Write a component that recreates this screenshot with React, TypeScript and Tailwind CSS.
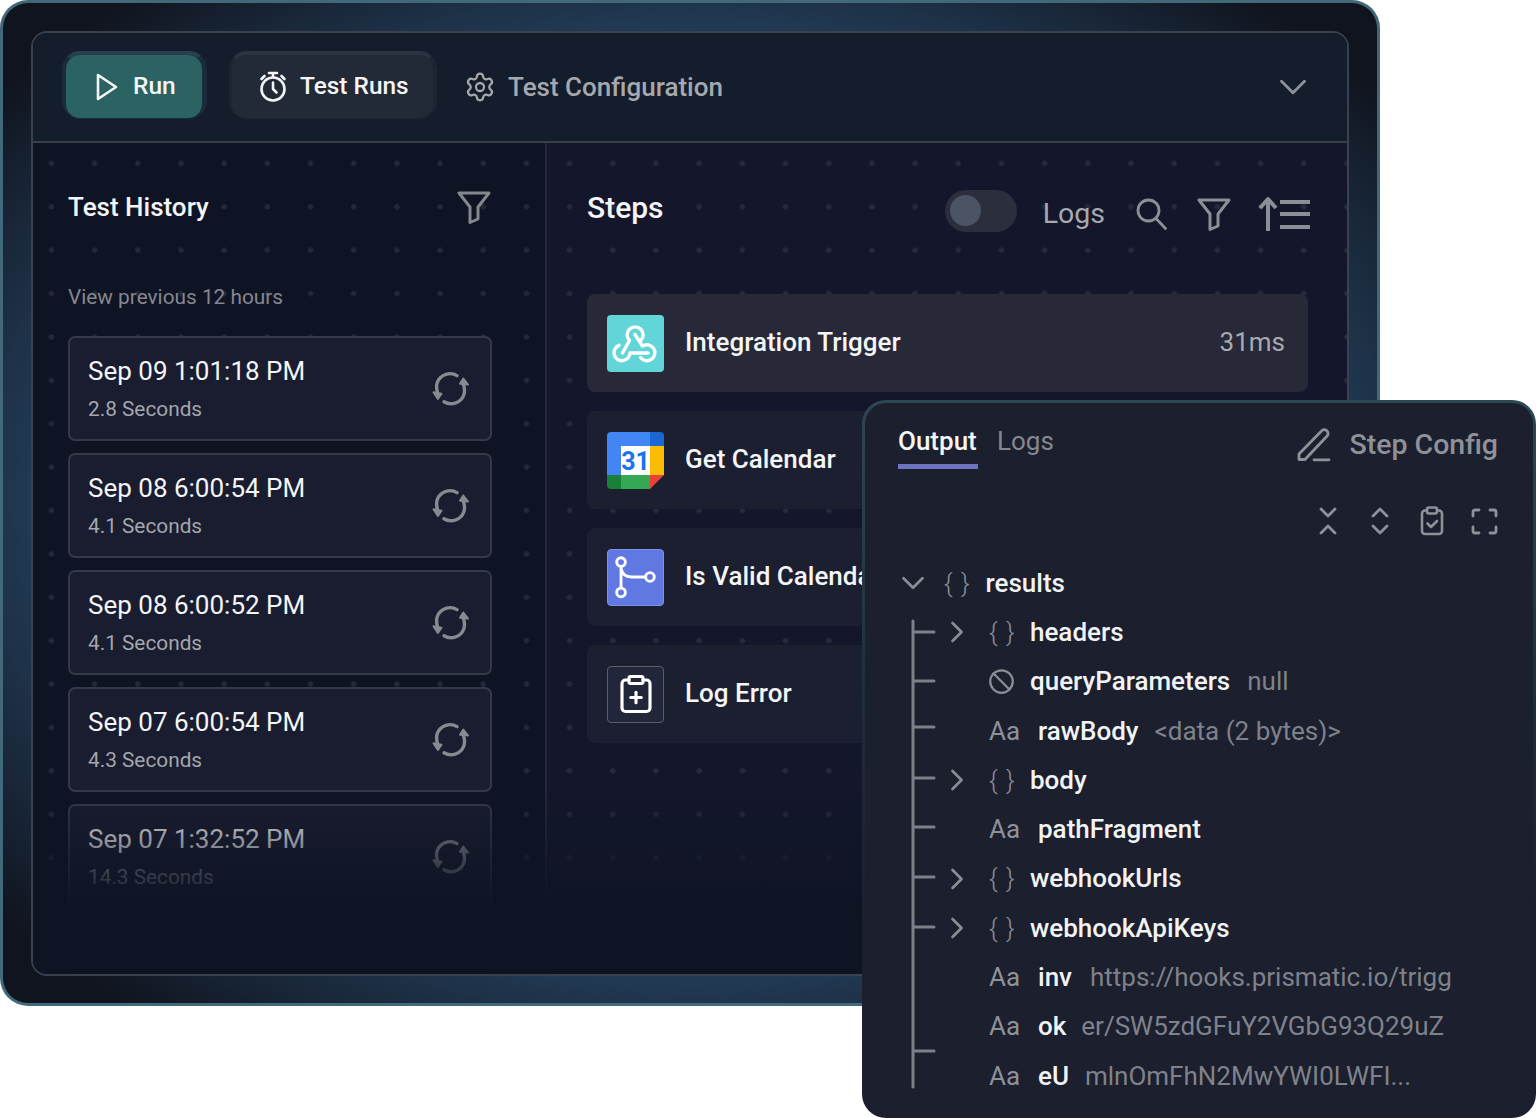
import React from "react";
import { ChevronDown, ChevronRight, Settings, ClipboardPlus, Ban } from "lucide-react";

const Funnel = ({ className }: { className?: string }) => (
  <svg viewBox="0 0 34 34" fill="none" stroke="currentColor" strokeWidth="3" strokeLinejoin="round" strokeLinecap="round" className={className}>
    <path d="M2 3h30L21 17v12l-8 3.500V17L2 3Z" />
  </svg>
);

const Refresh = () => (
  <svg viewBox="0 0 40 38" fill="none" stroke="currentColor" strokeWidth="3.400" strokeLinecap="round" strokeLinejoin="round" className="w-10 h-[38px] shrink-0">
    <path d="M26 5.600C19.500 1.600 9.500 4 6.300 12.500 5.200 15.500 5.400 19 6.600 23" />
    <path d="M13 31.800c6.500 4 16.600 1.800 19.800-6.800 1.100-3 .900-6.500-.3-10.500" />
    <path d="M2.500 22.300l8 1.500-3.600 5.200Z" fill="currentColor" strokeWidth="2" />
    <path d="M37 14.500l-8-.8 3.300-5.200Z" fill="currentColor" strokeWidth="2" />
  </svg>
);

const history = [
  ["Sep 09 1:01:18 PM", "2.8 Seconds"],
  ["Sep 08 6:00:54 PM", "4.1 Seconds"],
  ["Sep 08 6:00:52 PM", "4.1 Seconds"],
  ["Sep 07 6:00:54 PM", "4.3 Seconds"],
  ["Sep 07 1:32:52 PM", "14.3 Seconds"],
];

const WebhookIcon = () => (
  <div className="w-[57px] h-[57px] shrink-0 rounded-[4px] bg-[#62d5d8]">
    <svg viewBox="0 0 57 57" fill="none" stroke="#fff" strokeWidth="3.400" strokeLinecap="round" strokeLinejoin="round" className="w-full h-full">
      <path d="M12 30.300A8 8 0 1 0 23 38H41" />
      <path d="M33.500 42.500A8 8 0 1 0 35.500 31L28 19.500" />
      <path d="M33.800 25.500A8 8 0 1 0 22.500 25.500L15.500 38" />
    </svg>
  </div>
);

const CalendarIcon = () => (
  <svg viewBox="0 0 57 57" className="w-[57px] h-[57px] shrink-0">
    <path d="M4 0h39v14H14v29H0V4a4 4 0 0 1 4-4Z" fill="#4285f4" />
    <path d="M43 0h10a4 4 0 0 1 4 4v10H43Z" fill="#1967d2" />
    <rect x="14" y="14" width="29" height="29" fill="#fff" />
    <rect x="43" y="14" width="14" height="29" fill="#fbbc04" />
    <rect x="14" y="43" width="29" height="14" fill="#34a853" />
    <path d="M0 43h14v14H4a4 4 0 0 1-4-4Z" fill="#188038" />
    <path d="M43 43h14L43 57Z" fill="#ea4335" />
    <text x="28.500" y="37.500" textAnchor="middle" fontFamily="Roboto, sans-serif" fontWeight="700" fontSize="25" fill="#1a73e8">31</text>
  </svg>
);

const BranchIcon = () => (
  <div className="w-[57px] h-[57px] shrink-0 rounded-[4px] bg-[#5f78e2] border border-[#7d90e8]">
    <svg viewBox="0 0 57 57" fill="none" stroke="#fff" strokeWidth="3" className="w-full h-full">
      <circle cx="13.500" cy="12.500" r="4.500" />
      <circle cx="13.500" cy="44" r="4.500" />
      <circle cx="43.500" cy="28" r="4.500" />
      <path d="M13.500 17v22.500M13.500 19c1 6 5 9 11 9H39" />
    </svg>
  </div>
);

type TreeRow = {
  kind: "obj" | "null" | "str";
  key: string;
  value?: string;
  gap?: string;
};

const tree: TreeRow[] = [
  { kind: "obj", key: "headers" },
  { kind: "null", key: "queryParameters", value: "null", gap: "ml-[17px]" },
  { kind: "str", key: "rawBody", value: "<data (2 bytes)>", gap: "ml-[16px]" },
  { kind: "obj", key: "body" },
  { kind: "str", key: "pathFragment" },
  { kind: "obj", key: "webhookUrls" },
  { kind: "obj", key: "webhookApiKeys" },
  { kind: "str", key: "inv", value: "https://hooks.prismatic.io/trigg", gap: "ml-[18px]" },
  { kind: "str", key: "ok", value: "er/SW5zdGFuY2VGbG93Q29uZ", gap: "ml-[15px]" },
  { kind: "str", key: "eU", value: "mlnOmFhN2MwYWI0LWFI...", gap: "ml-[16px]" },
];

const Braces = () => <span className="text-[#8b8d95] text-[26px] font-light w-[24px] tracking-[1px] whitespace-nowrap shrink-0">{"{ }"}</span>;

export default function App() {
  return (
    <div className="relative w-[1536px] h-[1118px] bg-white overflow-hidden font-[Roboto,sans-serif]">
      <div className="w-[1380px] h-[1006px] rounded-[28px] p-[3px] bg-[#41697a]">
        <div className="w-full h-full rounded-[25px] pt-[28px] pl-[28px] pr-[28px] pb-[27px] bg-[radial-gradient(ellipse_at_center,#25425f_62%,#10141e_92%)]">
          <div className="relative w-full h-full rounded-[16px] border-2 border-[#3a404d] flex flex-col overflow-hidden bg-[#0f1425]">
            <header className="h-[110px] shrink-0 bg-[#141d2b] border-b-2 border-[#3a3e4b] flex items-center pl-[29px] pr-[31px]">
              <div className="w-[145px] h-[68px] -mt-[4px] rounded-[18px] border-l-[4px] border-r-[5px] border-t-[4px] border-b-[1px] border-x-[#1c2b3b] border-b-[#1c2b3b] border-t-[#274050]">
                <button className="w-full h-full rounded-[14px] bg-[#2a6361] flex items-center pl-[29px] gap-[14px] text-[#f4f5f7] text-[24.500px] font-medium">
                  <svg viewBox="0 0 24 30" fill="none" stroke="currentColor" strokeWidth="2.600" strokeLinejoin="round" className="w-[24px] h-[30px]">
                    <path d="M3 3v24l18-12Z" />
                  </svg>
                  Run
                </button>
              </div>
              <div className="ml-[22px] w-[208px] h-[68px] -mt-[4px] rounded-[18px] border-l-[3px] border-r-[4px] border-t-[4px] border-b-[1px] border-x-[#1c2533] border-b-[#1c2533] border-t-[#2b3443]">
                <button className="w-full h-full rounded-[14px] bg-[#222a38] flex items-center pl-[26px] gap-[12px] text-[#f4f5f7] text-[24.400px] font-medium">
                  <svg viewBox="0 0 30 32" fill="none" stroke="currentColor" strokeWidth="2.600" strokeLinecap="round" strokeLinejoin="round" className="w-[30px] h-[32px]">
                    <circle cx="15" cy="18" r="11.500" />
                    <path d="M15 11.500V18l3.500 3.500M11 2h8M15 2v4M3.500 8l3-3M26.500 8l-3-3" />
                  </svg>
                  Test Runs
                </button>
              </div>
              <Settings className="ml-[27px] w-[32px] h-[32px] text-[#a6a8ae]" strokeWidth={1.700} />
              <span className="ml-[12px] text-[26px] font-medium text-[#a6a8ae]">Test Configuration</span>
              <ChevronDown className="ml-auto w-[46px] h-[46px] text-[#8f9199]" strokeWidth={1.500} />
            </header>

            <div className="flex-1 min-h-0 flex">
              <section className="w-[514px] shrink-0 border-r-2 border-[#242838] pl-[35px] pr-[53px] pt-[44px] bg-[#0f1425] bg-[radial-gradient(circle,#242939_2.400px,transparent_3px)] bg-[size:43.200px_43.400px] bg-[position:-3.200px_-1.300px]">
                <div className="h-[40px] flex items-center justify-between">
                  <h2 className="text-[26px] font-medium text-[#f4f5f7]">Test History</h2>
                  <Funnel className="w-[34px] h-[34px] text-[#85878f] mr-[1px]" />
                </div>
                <p className="mt-[58px] h-[24px] leading-[24px] text-[20.800px] text-[#85878f]">View previous 12 hours</p>
                <div className="mt-[27px] flex flex-col gap-[12px]">
                  {history.map(([time, dur]) => (
                    <div key={time} className="h-[105px] shrink-0 rounded-[7px] border-2 border-[#343847] bg-[#191d2f] flex items-center justify-between pl-[18px] pr-[19px]">
                      <div className="pt-[1px]">
                        <div className="text-[26px] leading-[32px] text-[#f4f5f7] -mt-[2px]">{time}</div>
                        <div className="mt-[9px] text-[20.800px] leading-[26px] text-[#a4a6ad]">{dur}</div>
                      </div>
                      <span className="text-[#888a92]"><Refresh /></span>
                    </div>
                  ))}
                  <div className="h-[105px] shrink-0 rounded-[7px] border-2 border-[#343847] bg-[#191d2f]" />
                </div>
              </section>

              <section className="flex-1 min-w-0 pl-[40px] pr-[39px] bg-[#14172b] bg-[radial-gradient(circle,#252a3c_2.400px,transparent_3px)] bg-[size:43.200px_43.400px] bg-[position:1px_-1.300px]">
                <div className="h-[151px] pt-[44px] flex items-start">
                  <h2 className="h-[42px] leading-[42px] text-[30px] font-medium text-[#f4f5f7]">Steps</h2>
                  <div className="ml-auto flex items-center -mt-[1px] -mr-[2px]">
                    <div className="w-[72px] h-[42px] rounded-full bg-[#2b2e3d] flex items-center pl-[5px]">
                      <div className="w-[31px] h-[31px] rounded-full bg-[#4b5364]" />
                    </div>
                    <span className="ml-[26px] mt-[7px] text-[28.500px] text-[#a8a9ae]">Logs</span>
                    <svg viewBox="0 0 31 32" fill="none" stroke="#8d8f97" strokeWidth="2.800" strokeLinecap="round" className="ml-[31px] mt-[7px] w-[31px] h-[32px]">
                      <circle cx="12.500" cy="12.500" r="10.500" />
                      <path d="M20 20.500L29.500 30.500" />
                    </svg>
                    <Funnel className="ml-[30px] mt-[7px] w-[34px] h-[34px] text-[#8d8f97]" />
                    <svg viewBox="0 0 52 36" fill="none" stroke="#8d8f97" strokeWidth="4" className="ml-[27px] mt-[7px] w-[52px] h-[36px]">
                      <path d="M10 35V3M2 12l8-9 8 9" strokeLinejoin="round" />
                      <path d="M22 6h30M22 18h30M22 31h30" />
                    </svg>
                  </div>
                </div>
                <div className="flex flex-col gap-[19px]">
                  <div className="h-[98px] rounded-[8px] bg-[#272838] flex items-center pl-[20px] pr-[23px]">
                    <WebhookIcon />
                    <span className="ml-[21px] mb-[2px] text-[26px] font-medium text-[#f4f5f7]">Integration Trigger</span>
                    <span className="ml-auto mb-[2px] text-[26px] text-[#a9aab0]">31ms</span>
                  </div>
                  <div className="h-[98px] rounded-[8px] bg-[#1c1f30] flex items-center pl-[20px]">
                    <CalendarIcon />
                    <span className="ml-[21px] mb-[2px] text-[26px] font-medium text-[#f4f5f7]">Get Calendar</span>
                  </div>
                  <div className="h-[98px] rounded-[8px] bg-[#1c1f30] flex items-center pl-[20px]">
                    <BranchIcon />
                    <span className="ml-[21px] mb-[2px] text-[26px] font-medium text-[#f4f5f7] whitespace-nowrap">Is Valid Calendar</span>
                  </div>
                  <div className="h-[98px] rounded-[8px] bg-[#1c1f30] flex items-center pl-[20px]">
                    <div className="w-[57px] h-[57px] shrink-0 rounded-[4px] bg-[#22263a] border border-[#5b5e6a] flex items-center justify-center">
                      <ClipboardPlus className="w-[42px] h-[42px] text-white" strokeWidth={1.800} />
                    </div>
                    <span className="ml-[21px] mb-[2px] text-[26px] font-medium text-[#f4f5f7]">Log Error</span>
                  </div>
                </div>
              </section>
            </div>

            <div className="absolute left-0 right-0 bottom-0 h-[185px] bg-[linear-gradient(to_bottom,rgba(15,20,37,0)_0%,rgba(15,20,37,0.96)_62%,rgba(15,20,37,0.98)_100%)]" />
          </div>
        </div>
      </div>

      <aside className="absolute left-[862px] top-[400px] w-[674px] h-[718px] rounded-[24px] p-[3px] bg-[linear-gradient(to_bottom,#2f4753_0%,#1f2b38_45%,#1b1f2e_75%)]">
        <div className="relative w-full h-full rounded-[21px] bg-[#1b1f2e] pl-[33px] pr-[35px]">
          <div className="h-[68px] pt-[20px] flex items-start">
            <div className="w-[80px] h-[46px] border-b-[5px] border-[#6c74c0]">
              <span className="text-[26px] leading-[36px] font-medium text-[#f4f5f7]">Output</span>
            </div>
            <span className="ml-[19px] text-[26px] leading-[36px] text-[#85878f]">Logs</span>
            <div className="ml-auto flex items-center gap-[18px] pt-[4px] text-[#8f9199]">
              <svg viewBox="0 0 34 34" fill="none" stroke="currentColor" strokeWidth="2.800" strokeLinecap="round" strokeLinejoin="round" className="w-[34px] h-[34px] -ml-[2px]">
                <path d="M2 31.500V26L24.500 3a3.600 3.600 0 0 1 5.600 5L8 31.500Z" />
                <path d="M17 31.800h15" />
              </svg>
              <span className="text-[28.500px] font-medium leading-[36px]">Step Config</span>
            </div>
          </div>
          <div className="h-[87.500px] flex items-center justify-end gap-[34px] pt-[13px] text-[#8f9199]">
            <svg viewBox="0 0 18 28" fill="none" stroke="currentColor" strokeWidth="2.800" strokeLinecap="round" strokeLinejoin="round" className="w-[18px] h-[28px]">
              <path d="M2 2l7 7 7-7M2 26l7-7 7 7" />
            </svg>
            <svg viewBox="0 0 18 28" fill="none" stroke="currentColor" strokeWidth="2.800" strokeLinecap="round" strokeLinejoin="round" className="w-[18px] h-[28px]">
              <path d="M2 9l7-7 7 7M2 19l7 7 7-7" />
            </svg>
            <svg viewBox="0 0 24 30" fill="none" stroke="currentColor" strokeWidth="2.600" strokeLinecap="round" strokeLinejoin="round" className="w-[24px] h-[30px] ml-[-3px]">
              <path d="M7 4.500H5a3 3 0 0 0-3 3V25a3 3 0 0 0 3 3h14a3 3 0 0 0 3-3V7.500a3 3 0 0 0-3-3h-2" />
              <rect x="7" y="1.500" width="10" height="6" rx="2" />
              <path d="M7.500 17.500l3.500 3.500 6-6" />
            </svg>
            <svg viewBox="0 0 27 27" fill="none" stroke="currentColor" strokeWidth="2.800" strokeLinecap="round" strokeLinejoin="round" className="w-[27px] h-[27px] ml-[-7px]">
              <path d="M2 8V4a2 2 0 0 1 2-2h4M19 2h4a2 2 0 0 1 2 2v4M25 19v4a2 2 0 0 1-2 2h-4M8 25H4a2 2 0 0 1-2-2v-4" />
            </svg>
          </div>
          <div className="h-[49.300px] flex items-center pl-[2px] text-[26px]">
            <span className="w-[26px] h-[26px] shrink-0 flex items-center justify-center">
              <ChevronDown className="w-[38px] h-[38px] shrink-0 text-[#8b8d95]" strokeWidth={1.700} />
            </span>
            <span className="ml-[18px] mr-[15px]"><Braces /></span>
            <span className="font-medium text-[#f2f3f5]">results</span>
          </div>
          {tree.map((r) => (
            <div key={r.key} className="h-[49.300px] flex items-center pl-[46px] text-[26px] whitespace-nowrap">
              <span className="w-[26px] h-[26px] shrink-0 flex items-center justify-center">
                {r.kind === "obj" && <ChevronRight className="w-[36px] h-[36px] shrink-0 text-[#8b8d95]" strokeWidth={1.800} />}
              </span>
              <span className="ml-[19px] flex items-center">
                {r.kind === "obj" && <span className="w-[41px] shrink-0"><Braces /></span>}
                {r.kind === "null" && <span className="w-[41px] shrink-0"><Ban className="w-[27px] h-[27px] text-[#8b8d95] -ml-[1px]" strokeWidth={2} /></span>}
                {r.kind === "str" && <span className="w-[49px] shrink-0 text-[#8f9198]">Aa</span>}
              </span>
              <span className="font-medium text-[#f2f3f5]">{r.key}</span>
              {r.value && <span className={`${r.gap} text-[#7f828b]`}>{r.value}</span>}
            </div>
          ))}
          <svg className="absolute left-[46px] top-[215px] w-[26px] h-[472px]" viewBox="0 0 26 472" fill="none" stroke="#7e8088" strokeWidth="3" strokeLinecap="round">
            <path d="M2 3v466M2 14h21M2 63h21M2 109h21M2 160h21M2 209h21M2 259h21M2 309h21M2 433h21" />
          </svg>
        </div>
      </aside>
    </div>
  );
}
